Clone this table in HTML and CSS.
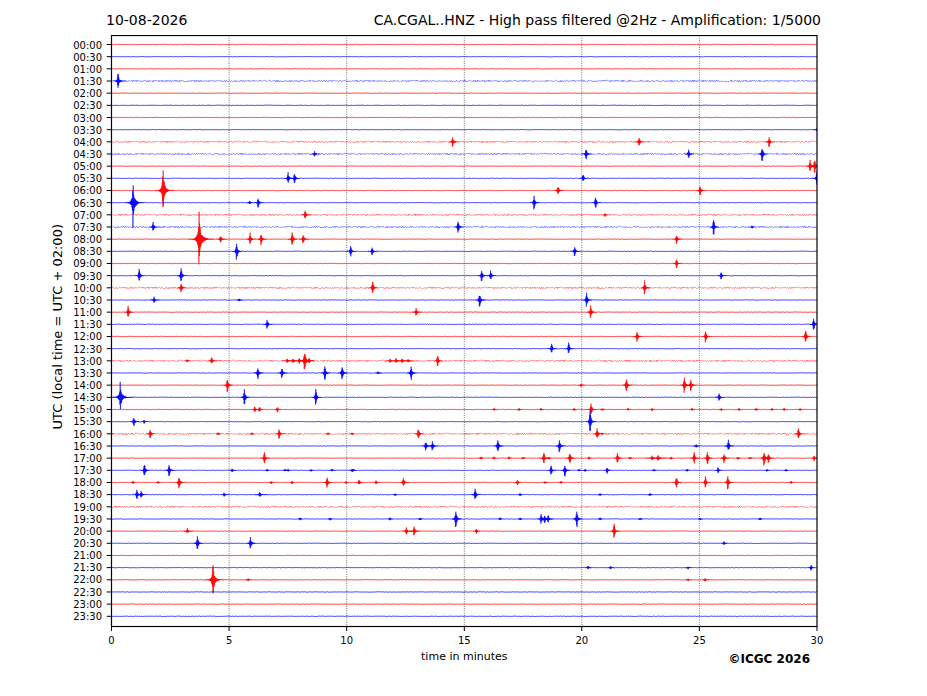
FILE: index.html
```html
<!DOCTYPE html>
<html>
<head>
<meta charset="utf-8">
<title>CA.CGAL..HNZ helicorder</title>
<link rel="stylesheet" href="styles.css">
</head>
<body>
<div class="figure">
  <div class="titles">
    <span class="title-date">10-08-2026</span>
    <span class="title-main">CA.CGAL..HNZ - High pass filtered @2Hz - Amplification: 1/5000</span>
  </div>
  <div class="chart">
    <div class="ylabel"><span>UTC (local time = UTC + 02:00)</span></div>
    <div class="yticks">
      <span>00:00</span><span>00:30</span><span>01:00</span><span>01:30</span>
      <span>02:00</span><span>02:30</span><span>03:00</span><span>03:30</span>
      <span>04:00</span><span>04:30</span><span>05:00</span><span>05:30</span>
      <span>06:00</span><span>06:30</span><span>07:00</span><span>07:30</span>
      <span>08:00</span><span>08:30</span><span>09:00</span><span>09:30</span>
      <span>10:00</span><span>10:30</span><span>11:00</span><span>11:30</span>
      <span>12:00</span><span>12:30</span><span>13:00</span><span>13:30</span>
      <span>14:00</span><span>14:30</span><span>15:00</span><span>15:30</span>
      <span>16:00</span><span>16:30</span><span>17:00</span><span>17:30</span>
      <span>18:00</span><span>18:30</span><span>19:00</span><span>19:30</span>
      <span>20:00</span><span>20:30</span><span>21:00</span><span>21:30</span>
      <span>22:00</span><span>22:30</span><span>23:00</span><span>23:30</span>
    </div>
    <svg class="plot" width="714" height="597" viewBox="104 35 714 597" xmlns="http://www.w3.org/2000/svg">
      <defs>
        <clipPath id="axclip"><rect x="111.5" y="35.5" width="705.5" height="591"/></clipPath>
      </defs>
      <g class="grid">
        <line x1="229.1" y1="35.5" x2="229.1" y2="626.5"/>
        <line x1="346.7" y1="35.5" x2="346.7" y2="626.5"/>
        <line x1="464.3" y1="35.5" x2="464.3" y2="626.5"/>
        <line x1="581.8" y1="35.5" x2="581.8" y2="626.5"/>
        <line x1="699.4" y1="35.5" x2="699.4" y2="626.5"/>
      </g>
      <g id="traces" clip-path="url(#axclip)"></g>
      <path id="ytickmarks" class="ticks" d=""/>
      <path class="ticks" d="M111.5 626.5V631 M229.1 626.5V631 M346.7 626.5V631 M464.3 626.5V631 M581.8 626.5V631 M699.4 626.5V631 M817 626.5V631"/>
      <rect class="frame" x="111.5" y="35.5" width="705.5" height="591"/>
    </svg>
  </div>
  <div class="xticks">
    <span>0</span><span>5</span><span>10</span><span>15</span><span>20</span><span>25</span><span>30</span>
  </div>
  <div class="footer">
    <span class="xlabel">time in minutes</span>
    <span class="copyright">©ICGC 2026</span>
  </div>
</div>
<script src="script.js"></script>
</body>
</html>
```
FILE: styles.css
```css
html, body {
  margin: 0;
  padding: 0;
  background: #ffffff;
}
body {
  width: 927px;
  height: 696px;
  overflow: hidden;
  font-family: "DejaVu Sans", "Liberation Sans", sans-serif;
  color: #000000;
}
.figure {
  display: flex;
  flex-direction: column;
}
.titles {
  display: flex;
  justify-content: space-between;
  margin-left: 106px;
  width: 715px;
  padding-top: 12px;
  height: 16px;
  line-height: 16px;
  font-size: 14px;
  white-space: nowrap;
}
.chart {
  display: flex;
  margin-top: 7px;
  height: 597px;
}
.ylabel {
  width: 16px;
  margin-left: 50px;
  height: 591px;
  padding-bottom: 8px;
  box-sizing: border-box;
  display: flex;
  align-items: center;
  justify-content: center;
}
.ylabel span {
  writing-mode: vertical-rl;
  transform: rotate(180deg);
  font-size: 13px;
  line-height: 16px;
  white-space: nowrap;
}
.yticks {
  width: 36px;
  display: flex;
  flex-direction: column;
  align-items: flex-end;
  padding-top: 4.6px;
  font-size: 10px;
}
.yticks span {
  height: 12.166px;
  line-height: 12.166px;
}
.plot {
  margin-left: 2px;
  display: block;
}
.grid line {
  stroke: #444444;
  stroke-width: 0.8;
  stroke-dasharray: 0.9 1.4;
}
.ticks {
  stroke: #000000;
  stroke-width: 1;
  fill: none;
}
.frame {
  fill: none;
  stroke: #000000;
  stroke-width: 1.2;
}
.trace {
  fill: none;
  stroke-width: 0.8;
  stroke-linejoin: round;
}
.trace.noisy {
  stroke-opacity: 0.5;
  stroke-width: 0.8;
}
.trace.event {
  stroke-width: 0.6;
}
.trace.red { stroke: #ff0000; }
.trace.blue { stroke: #0000ff; }
.xticks {
  display: flex;
  justify-content: space-between;
  margin-left: 111.5px;
  width: 705.5px;
  margin-top: 2.5px;
  height: 12px;
  line-height: 12px;
  font-size: 10px;
}
.xticks span {
  width: 0;
  display: flex;
  justify-content: center;
  white-space: nowrap;
}
.footer {
  display: grid;
  margin-left: 111.5px;
  width: 705.5px;
  margin-top: 3px;
}
.xlabel {
  grid-area: 1 / 1;
  justify-self: center;
  font-size: 11px;
  line-height: 13px;
}
.copyright {
  grid-area: 1 / 1;
  justify-self: end;
  margin-right: 7px;
  margin-top: 2.5px;
  font-size: 12px;
  line-height: 14px;
  font-weight: bold;
}
```
FILE: script.js
```js
(function () {
  var NS = 'http://www.w3.org/2000/svg';
  var g = document.getElementById('traces');
  var X0 = 111.5, X1 = 817, Y0 = 44.5, DY = 12.166;
  var seed = 987654321;
  function rnd() {
    seed = (seed * 1664525 + 1013904223) >>> 0;
    return seed / 4294967296;
  }
  // [row, x(px), half-amplitude(px), duration(px)]
  var E = [
    [3,118,8,4],
    [7,818,8,4],
    [8,452.5,5,3],[8,639,5,3],[8,769,5,3],
    [9,314.5,3,3],[9,586,6,3],[9,688.5,4,3],[9,762,8,3],
    [10,810,6,3],[10,814.5,8,3],
    [11,288,6,3],[11,294.5,6,3],[11,583,4,3],[11,817,10,4],
    [12,163,25,6],[12,558,5,3],[12,700,5,3],
    [13,133,24,6],[13,249.5,2,2],[13,258,5,3],[13,534,7,3],[13,595.5,6,3],
    [14,305,5,3],[14,605,2,2],
    [15,153,5,3],[15,458,6,3],[15,713.5,8,3],[15,752,1.5,2],
    [16,199,32,8],[16,220.5,4,3],[16,250,6,3],[16,261,6,3],[16,292,7,3],[16,303,5,3],[16,676.5,5,3],
    [17,236.5,9,3],[17,350.5,6,3],[17,372,4,3],[17,574.5,5,3],
    [18,676.5,5,3],
    [19,139,7,3],[19,181,8,3],[19,481.5,6,3],[19,490.5,5,3],[19,721,4,3],
    [20,181,5,3],[20,372.5,7,3],[20,644.5,7,3],
    [21,154,3,3],[21,239,1.5,2],[21,479.5,7,3],[21,586.5,7,3],
    [22,128,6,3],[22,416,4,3],[22,590.5,7,3],
    [23,267,5,3],[23,813.5,7,3],
    [24,637,6,3],[24,705.5,6,3],[24,805.5,7,3],
    [25,551.5,5,3],[25,568.5,6,3],
    [26,187,1.5,2],[26,211.5,4,3],[26,287,2,4],[26,293,2.5,4],[26,299,3,4],[26,304.5,11,5],[26,309,3,3],[26,390,2,4],[26,396,2.5,4],[26,402,2.5,4],[26,408,2,3],[26,437.5,6,3],
    [27,257.7,7,3],[27,281.7,6,3],[27,324.7,8,3],[27,342,8,3],[27,411,8,3],[27,378,1.5,2],
    [28,227.3,7,3],[28,581,2,2],[28,626.3,7,3],[28,684.3,8,3],[28,690.7,6,3],
    [29,120.3,16,7],[29,244.3,8,3],[29,315.7,8,3],[29,719,4,3],
    [30,254.7,3,2],[30,259.3,3,2],[30,277.3,3,2],[30,591,6,3],
    [31,133.7,5,3],[31,144,2,2],[31,590,12,3],
    [32,150,5,3],[32,279,5,3],[32,418.3,6,3],[32,597,6,3],[32,798.3,6,3],
    [33,425.7,5,3],[33,432.3,5,3],[33,497.7,7,3],[33,559.3,7,3],[33,696,2,2],[33,728.3,6,3],
    [34,264.3,6,3],[34,543.7,6,3],[34,569.7,6,3],[34,617.3,5,3],[34,652,2.5,5],[34,658,3,5],[34,694,6,3],[34,707.3,7,3],[34,724,5,3],[34,764,8,3],[34,768.3,6,3],[34,814,3,2],
    [35,144.3,7,3],[35,169,6,3],[35,232,2,2],[35,332,1.5,2],[35,352,2,2],[35,551,5,3],[35,564.7,7,3],[35,607,3,2],[35,718,3,2],
    [36,179,7,3],[36,327,6,3],[36,359,3,2],[36,376,2,2],[36,403.3,5,3],[36,517.3,3,2],[36,676.3,6,3],[36,705.3,6,3],[36,727.7,7,3],
    [37,136.7,5,3],[37,141,4,3],[37,224,2,2],[37,259.7,3,4],[37,475,6,3],
    [39,455.7,10,3],[39,541,5,3],[39,544.5,5,3],[39,548,5,3],[39,576.7,9,3],
    [40,187.3,3,3],[40,406.3,4,3],[40,414,5,3],[40,476.3,3,2],[40,614,8,3],
    [41,197.3,8,3],[41,250.3,7,3],[41,724,2,2],
    [43,588,2,2],[43,610.5,2,2],[43,688,1.5,2],[43,811,3,2],
    [44,213,19,6],[44,248,1.5,2],[44,688,1.5,2],[44,705,2,2]
  ];
  // small spikes [row, [x...]]
  var S = [
    [30,[494,519,541,574,602,628,652,692,721,739,756,772,784,800]],
    [32,[111,218,252,328,352,602]],
    [34,[481,494,509,523,549,589,630,671,738,750]],
    [35,[267,285,288,311,353,579,585,654,687,767,786]],
    [36,[133,158,271,292,346,545,561,791]],
    [37,[395,520,600,650]],
    [39,[300,330,390,420,500,520,600,640,700,760]]
  ];
  S.forEach(function (s) {
    s[1].forEach(function (x) { E.push([s[0], x, 1.4, 1.2]); });
  });
  var noisy = {3:1, 8:1, 9:1, 14:1, 15:1, 20:1, 26:1, 32:1, 38:1};

  function addPath(d, cls) {
    var p = document.createElementNS(NS, 'path');
    p.setAttribute('d', d);
    p.setAttribute('class', cls);
    g.appendChild(p);
  }

  function eventValue(e, x, s) {
    var dx = x - e[1];
    var w = e[3];
    var sw = dx < 0 ? 0.4 : 0.7;
    var spike = 1 / (1 + (dx / sw) * (dx / sw));
    var bw = dx < 0 ? w * 0.45 : w * 0.7;
    var body = 0.14 * Math.exp(-(dx / bw) * (dx / bw));
    return s * e[2] * (spike * (0.5 + 0.5 * rnd()) + body * (0.4 + 0.6 * rnd()));
  }

  var ticks = '';
  for (var r = 0; r < 48; r++) {
    var y0 = Y0 + r * DY;
    ticks += 'M106.7 ' + y0.toFixed(2) + 'H111.5 ';
    var color = (r % 2 === 0 ? 'red' : 'blue');
    var isNoisy = !!noisy[r];
    var n = isNoisy ? 0.85 : 0.2;
    var d = '';
    var k = 0;
    for (var x = X0 - 1; x <= X1 + 2; x += 0.5, k++) {
      var v = (rnd() - 0.5) * 2 * n;
      d += (k === 0 ? 'M' : 'L') + x.toFixed(2) + ' ' + (y0 + v).toFixed(2);
    }
    addPath(d, 'trace ' + color + (isNoisy ? ' noisy' : ''));
    var evs = E.filter(function (e) { return e[0] === r; });
    var ed = '';
    evs.forEach(function (e) {
      var w = e[3];
      var a = e[1] - Math.max(2, w * 1.3);
      var b = e[1] + Math.max(2.5, w * 1.9);
      var kk = 0;
      for (var xx = a; xx <= b; xx += 0.25, kk++) {
        var s = (kk % 2) ? 1 : -1;
        var vv = eventValue(e, xx, s) + (rnd() - 0.5) * 0.3;
        ed += (kk === 0 ? 'M' : 'L') + xx.toFixed(2) + ' ' + (y0 + vv).toFixed(2);
      }
    });
    if (ed) addPath(ed, 'trace event ' + color);
  }
  document.getElementById('ytickmarks').setAttribute('d', ticks);
})();
```
